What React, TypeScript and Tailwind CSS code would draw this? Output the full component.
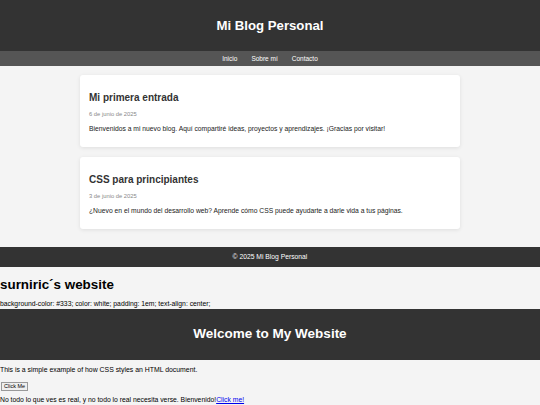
import React from 'react';

interface Post {
    title: string;
    date: string;
    text: string;
}

const posts: Post[] = [
    {
        title: 'Mi primera entrada',
        date: '6 de junio de 2025',
        text: 'Bienvenidos a mi nuevo blog. Aquí compartiré ideas, proyectos y aprendizajes. ¡Gracias por visitar!',
    },
    {
        title: 'CSS para principiantes',
        date: '3 de junio de 2025',
        text: '¿Nuevo en el mundo del desarrollo web? Aprende cómo CSS puede ayudarte a darle vida a tus páginas.',
    },
];

const navLinks = ['Inicio', 'Sobre mí', 'Contacto'];

const App = () => {
    return (
        <div className="min-h-[405px] w-[540px] bg-[#f4f4f4] font-['Liberation_Sans',Arial,sans-serif] text-[#222]">
            {/* BLOG HEADER */}
            <header className="flex h-[51px] items-center justify-center bg-[#333]">
                <h1 className="text-[13.2px] font-bold text-white">Mi Blog Personal</h1>
            </header>

            {/* NAV */}
            <nav className="flex h-[15px] items-center justify-center gap-[14px] bg-[#555]">
                {navLinks.map((link) => (
                    <a key={link} href="#" className="text-[6.5px] leading-[15px] text-white">
                        {link}
                    </a>
                ))}
            </nav>

            {/* POSTS */}
            <main className="mx-auto flex w-[380px] flex-col gap-[10px] pt-[9px] pb-[18px]">
                {posts.map((post) => (
                    <article
                        key={post.title}
                        className="rounded-[3px] bg-white px-[9px] pt-[9px] pb-[14px] shadow-[0_1px_4px_rgba(0,0,0,0.09)]"
                    >
                        <h2 className="mt-[8px] text-[10px] leading-[12px] font-bold text-[#333]">{post.title}</h2>
                        <p className="mt-[7px] text-[5.8px] leading-[7px] text-[#888]">{post.date}</p>
                        <p className="mt-[7px] text-[6.75px] leading-[8px] text-[#222]">{post.text}</p>
                    </article>
                ))}
            </main>

            <footer className="flex h-[20px] items-center justify-center bg-[#333]">
                <p className="text-[6.75px] text-white">© 2025 Mi Blog Personal</p>
            </footer>

            {/* SECOND PAGE */}
            <h1 className="mt-[10px] text-[13.4px] leading-[15px] font-bold text-black">surniric´s website</h1>
            <p className="mt-[8px] text-[6.8px] leading-[8px] text-black">
                background-color: #333; color: white; padding: 1em; text-align: center;
            </p>
            <div className="mt-[1px] flex h-[51px] items-center justify-center bg-[#333]">
                <h2 className="text-[13.5px] font-bold text-white">Welcome to My Website</h2>
            </div>
            <p className="mt-[6px] text-[6.9px] leading-[8px] text-black">
                This is a simple example of how CSS styles an HTML document.
            </p>
            <button className="mt-[8px] ml-[1px] block h-[9px] border border-[#999] bg-[#efefef] px-[2px] text-[5.5px] leading-[7px] text-black">
                Click Me
            </button>
            <p className="mt-[4px] text-[6.8px] leading-[9px] text-black">
                No todo lo que ves es real, y no todo lo real necesita verse. Bienvenido!
                <a href="#" className="text-[#0000ee] underline">Click me!</a>
            </p>
        </div>
    );
};

export default App;
